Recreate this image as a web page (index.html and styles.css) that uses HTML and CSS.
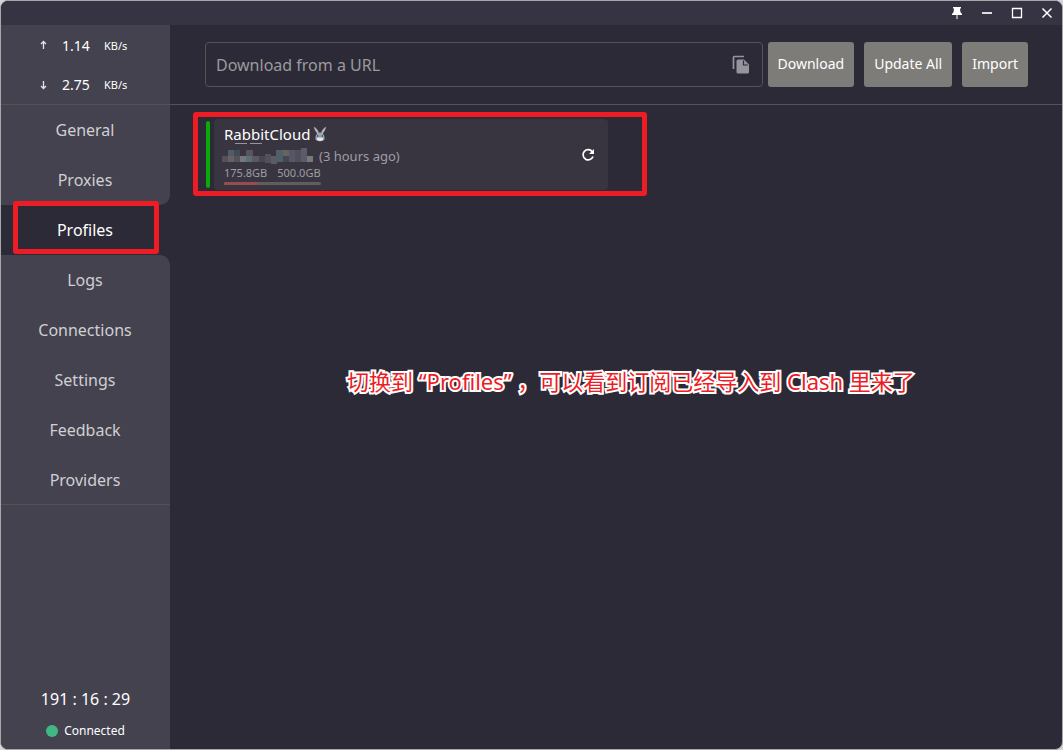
FILE: index.html
```html
<!DOCTYPE html>
<html lang="en">
<head>
<meta charset="utf-8">
<title>Clash</title>
<link rel="stylesheet" href="styles.css">
</head>
<body>
<div class="window">
  <header class="titlebar">
    <button class="win-btn" aria-label="Pin"><svg width="12" height="14" viewBox="0 0 12 14"><path d="M2 1h8v1.500H9L9.400 6 11 8v1H1V8l1.600-2L3 2.500H2z" fill="#fff"/><path d="M6 9v4" stroke="#bbb" stroke-width="1.500"/></svg></button>
    <button class="win-btn" aria-label="Minimize"><svg width="12" height="12" viewBox="0 0 12 12"><path d="M1 6h10" stroke="#ddd" stroke-width="2"/></svg></button>
    <button class="win-btn" aria-label="Maximize"><svg width="12" height="12" viewBox="0 0 12 12"><path d="M1.500 1.500h9v9h-9z" fill="none" stroke="#fff" stroke-width="1.300"/></svg></button>
    <button class="win-btn" aria-label="Close"><svg width="12" height="12" viewBox="0 0 12 12"><path d="M1.500 1.500l9 9M10.500 1.500l-9 9" stroke="#fff" stroke-width="1.500"/></svg></button>
  </header>
  <div class="layout">
    <aside class="sidebar">
      <div class="traffic">
        <div class="rate"><svg width="7" height="10" viewBox="0 0 7 10"><path d="M3.500 9V1.500M1 4l2.500-2.500L6 4" fill="none" stroke="#e8defa" stroke-width="1.300"/></svg><span class="value">1.14</span><span class="unit">KB/s</span></div>
        <div class="rate"><svg width="7" height="10" viewBox="0 0 7 10"><path d="M3.500 1v7.500M1 6l2.500 2.500L6 6" fill="none" stroke="#e8defa" stroke-width="1.300"/></svg><span class="value">2.75</span><span class="unit">KB/s</span></div>
      </div>
      <nav class="nav">
        <a href="#general">General</a>
        <a href="#proxies" class="before-active">Proxies</a>
        <a href="#profiles" class="active" aria-current="page">Profiles<span class="mark mark-nav"></span></a>
        <a href="#logs" class="after-active">Logs</a>
        <a href="#connections">Connections</a>
        <a href="#settings">Settings</a>
        <a href="#feedback">Feedback</a>
        <a href="#providers" class="last">Providers</a>
      </nav>
      <div class="status">
        <div class="uptime">191 : 16 : 29</div>
        <div class="connection"><span class="dot"></span>Connected</div>
      </div>
    </aside>
    <main class="main">
      <form class="toolbar">
        <div class="field">
          <input type="text" aria-label="Profile URL" placeholder="Download from a URL">
          <button type="button" class="icon-btn" aria-label="Paste"><svg width="18" height="20" viewBox="0 0 18 20"><path d="M1.500 14V2.500a1 1 0 0 1 1-1H12" fill="none" stroke="#96949d" stroke-width="1.700"/><path d="M6 4.500h6l5 5V17a1.500 1.500 0 0 1-1.500 1.500H6A1.500 1.500 0 0 1 4.500 17V6A1.500 1.500 0 0 1 6 4.500z" fill="#96949d"/><path d="M11.500 5.500v4.500H16" fill="none" stroke="#2c2a37" stroke-width="1.200"/></svg></button>
        </div>
        <button type="button" class="btn">Download</button>
        <button type="button" class="btn">Update All</button>
        <button type="button" class="btn">Import</button>
      </form>
      <section class="profiles">
        <article class="profile">
          <div class="indicator"></div>
          <div class="card">
            <div class="info">
              <h2 class="name">RabbitCloud<svg width="14" height="16" viewBox="0 0 14 16"><path d="M5 8.500C3 6.500 1 3.500 .8.800 3.500 1.800 5.500 4.500 6.200 8zM9 8.500c2-2 4-5 4.200-7.700C10.500 1.800 8.500 4.500 7.800 8z" fill="#99a8b2"/><path d="M4.800 7C3.500 5.500 2.300 3.800 2 2.300 3.600 3.300 4.800 5 5.300 7zM9.200 7c1.300-1.500 2.500-3.200 2.800-4.700C10.400 3.300 9.200 5 8.700 7z" fill="#e7a9b0"/><path d="M7 6.500c2.500 0 4 1.800 4.500 4.500.7 3-1.500 4.200-4.500 4.200S1.800 14 2.500 11C3 8.300 4.500 6.500 7 6.500z" fill="#99a8b2"/><ellipse cx="7" cy="13" rx="3" ry="1.700" fill="#e8edf0"/><circle cx="4.800" cy="10" r=".8" fill="#34313c"/><circle cx="9.200" cy="10" r=".8" fill="#34313c"/><path d="M6 11.300h2l-1 1.200z" fill="#d8838e"/></svg></h2>
              <div class="meta"><svg class="mosaic" width="91" height="24" viewBox="0 0 91 24" aria-hidden="true"><path d="M13 1.500h29" stroke="#9b92a5" stroke-dasharray="12 3"/><path d="M6 8h6v6H6z" fill="#505c68"/><path d="M12 8h6v6h-6z" fill="#424a55"/><path d="M24 8h7v6h-7z" fill="#57565f"/><path d="M0 14h6v6H0z" fill="#535159"/><path d="M6 14h6v6H6z" fill="#69615f"/><path d="M12 14h6v6h-6z" fill="#54515c"/><path d="M18 14h6v6h-6z" fill="#77757f"/><path d="M24 14h6v6h-6z" fill="#596f73"/><path d="M30 14h7v6h-7z" fill="#5a5767"/><path d="M37 14h6v6h-6z" fill="#484653"/><path d="M43 12h6v9h-6z" fill="#52505c"/><path d="M49 14h6v8h-6z" fill="#5c5a66"/><path d="M54 8h7v12h-7z" fill="#50606b"/><path d="M61 8h6v6h-6z" fill="#67635f"/><path d="M61 14h6v6h-6z" fill="#484552"/><path d="M67 8h6v12h-6z" fill="#555765"/><path d="M73 8h6v12h-6z" fill="#504f5d"/><path d="M79 6h6v14h-6z" fill="#5c5b69"/><path d="M85 14h6v6h-6z" fill="#737b7c"/></svg><span>(3 hours ago)</span></div>
              <div class="usage">
                <div class="amounts"><span>175.8GB</span><span>500.0GB</span></div>
                <div class="bar"><div class="fill" style="width:35.2%"></div></div>
              </div>
            </div>
            <button class="icon-btn" aria-label="Update profile"><svg width="14" height="14" viewBox="0 0 14 14"><path d="M11.200 3.600A5.100 5.100 0 1 0 12 8.500" fill="none" stroke="#fff" stroke-width="1.700"/><path d="M13 1v5H8z" fill="#fff"/></svg></button>
          </div>
          <span class="mark mark-card"></span>
        </article>
      </section>
      <p class="note" lang="zh">切换到 “Profiles” ，可以看到订阅已经导入到 Clash 里来了</p>
    </main>
  </div>
</div>
</body>
</html>
```
FILE: styles.css
```css
* { box-sizing: border-box; }
body {
  margin: 0;
  background: #d5d5d8;
  color: #fff;
  font-family: "Noto Sans", "Noto Sans CJK SC", sans-serif;
}
button { font: inherit; color: inherit; border: 0; padding: 0; background: none; }
svg { display: block; flex: none; }
.window {
  display: flex;
  flex-direction: column;
  min-height: 100vh;
  border: 1px solid #a6a8a9;
  border-radius: 8px;
  overflow: hidden;
  background: #2c2a37;
}
.titlebar {
  display: flex;
  justify-content: flex-end;
  height: 24px;
  background: #363442;
}
.win-btn { width: 30px; display: grid; place-items: center; }
.layout { flex: 1; display: flex; }
.sidebar { width: 169px; display: flex; flex-direction: column; }
.traffic { background: #43424e; border-bottom: 1px solid #56524f; }
.rate {
  display: flex;
  align-items: center;
  height: 40px;
  padding-left: 39px;
}
.rate:last-child { height: 39px; }
.value { width: 42px; margin-left: 15px; font-size: 14px; }
.unit { font-size: 11px; }
.nav { display: flex; flex-direction: column; }
.nav a {
  height: 50px;
  display: grid;
  place-items: center;
  padding-right: 1px;
  background: #43424e;
  color: #d0cfd2;
  font-size: 16px;
  text-decoration: none;
}
.nav .active { position: relative; background: #2c2a37; color: #fff; }
.nav .before-active { border-bottom-right-radius: 10px; }
.nav .after-active { border-top-right-radius: 10px; }
.nav .last { border-bottom: 1px solid #56524f; }
.mark {
  position: absolute;
  border: 5px solid #ee1c25;
  border-radius: 3px;
  pointer-events: none;
}
.mark-nav { inset: -4px 11px 1px 12px; }
.mark-card { inset: -7px -39px -6px -12px; }
.status {
  flex: 1;
  display: flex;
  flex-direction: column;
  justify-content: flex-end;
  align-items: center;
  gap: 12px;
  padding-bottom: 8px;
  background: #43424e;
}
.uptime { font-size: 16px; line-height: 20px; }
.connection { display: flex; align-items: center; gap: 6px; font-size: 12px; line-height: 20px; }
.dot { width: 12px; height: 12px; border-radius: 50%; background: #41b883; }
.main { flex: 1; min-width: 0; position: relative; }
.toolbar {
  display: flex;
  height: 80px;
  padding: 17px 34px 17px 35px;
  gap: 10px;
  border-bottom: 1px solid #56524f;
}
.field {
  flex: 1;
  display: flex;
  align-items: center;
  margin-right: -5px;
  padding: 0 12px 0 10px;
  border: 1px solid #56524f;
  border-radius: 4px;
}
.field input {
  flex: 1;
  min-width: 0;
  padding: 0;
  border: 0;
  outline: 0;
  background: none;
  color: #fff;
  font: inherit;
  font-size: 16px;
}
.field input::placeholder { color: #9b9a9e; opacity: 1; }
.btn {
  height: 45px;
  padding: 0 10px 2px;
  border-radius: 3px;
  background: #7e7c79;
  font-size: 14px;
}
.profiles {
  display: grid;
  grid-template-columns: 1fr 1fr;
  gap: 18px;
  padding: 14px 34px 14px 35px;
}
.profile { position: relative; display: flex; gap: 4px; }
.indicator { width: 4px; margin: 2px 0; margin-left: 1px; border-radius: 2px; background: #09aa09; }
.card {
  flex: 1;
  display: flex;
  align-items: center;
  justify-content: space-between;
  padding: 5px 13px 5px 10px;
  border-radius: 4px;
  background: #383541;
}
.name {
  display: flex;
  align-items: center;
  margin: 0;
  font-size: 15px;
  font-weight: 400;
  line-height: 20px;
}
.name svg { margin-left: 3px; }
.meta {
  display: flex;
  align-items: flex-end;
  gap: 6px;
  height: 22px;
  margin-left: -2px;
  color: #9f9da3;
  font-size: 13px;
  line-height: 20px;
}
.usage { width: max-content; }
.amounts { display: flex; gap: 10px; color: #9f9da3; font-size: 11px; line-height: 14px; }
.bar { height: 3px; margin-top: 2px; border-radius: 2px; background: #5f5e5d; overflow: hidden; }
.fill { height: 100%; background: #984b50; }
.note {
  position: absolute;
  left: 177px;
  top: 340px;
  margin: 0;
  color: #ee1c25;
  font-size: 22px;
  line-height: 32px;
  white-space: nowrap;
  -webkit-text-stroke: 4px #fff;
  paint-order: stroke fill;
}
```
